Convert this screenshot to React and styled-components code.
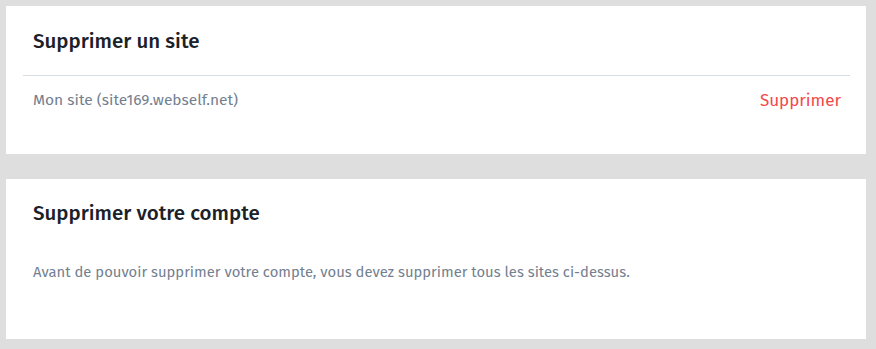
import React from "react";
import styled, {createGlobalStyle} from "styled-components";

const GlobalStyle = createGlobalStyle`
  html, body {
    margin: 0;
    background: #dedede;
  }
  body {
    font-family: "Fira Sans", "Open Sans", "Liberation Sans", sans-serif;
  }
`;

const Page = styled.div`
  width: 860px;
  padding: 6px 0 10px 6px;
  display: flex;
  flex-direction: column;
  gap: 25px;
`;

const Card = styled.section`
  background: #ffffff;
  padding: 0 16px 0 17px;
  height: ${props => props.height}px;
  box-sizing: border-box;
`;

const Header = styled.div`
  height: ${props => props.height}px;
  display: flex;
  align-items: center;
  padding: 0 10px;
  border-bottom: ${props => props.divider ? "1px solid #d8dde3" : "none"};
`;

const Title = styled.h3`
  margin: 0;
  font-size: 20.5px;
  font-weight: 500;
  color: #1b2129;
`;

const Row = styled.div`
  height: 48px;
  display: flex;
  align-items: center;
  justify-content: space-between;
  padding: 0 9px 0 10px;
`;

const SiteName = styled.span`
  font-size: 15.5px;
  color: #738090;
`;

const DeleteLink = styled.a`
  font-size: 17px;
  color: #f2484b;
  cursor: pointer;
`;

const Text = styled.p`
  margin: 17px 0 0;
  padding: 0 10px;
  font-size: 14.8px;
  color: #738090;
`;

const App = () => (
    <>
        <GlobalStyle/>
        <Page>
            <Card height={148}>
                <Header height={69} divider>
                    <Title>Supprimer un site</Title>
                </Header>
                <Row>
                    <SiteName>Mon site (site169.webself.net)</SiteName>
                    <DeleteLink>Supprimer</DeleteLink>
                </Row>
            </Card>

            <Card height={160}>
                <Header height={67}>
                    <Title>Supprimer votre compte</Title>
                </Header>
                <Text>
                    Avant de pouvoir supprimer votre compte, vous devez supprimer tous les sites ci-dessus.
                </Text>
            </Card>
        </Page>
    </>
);

export default App;
